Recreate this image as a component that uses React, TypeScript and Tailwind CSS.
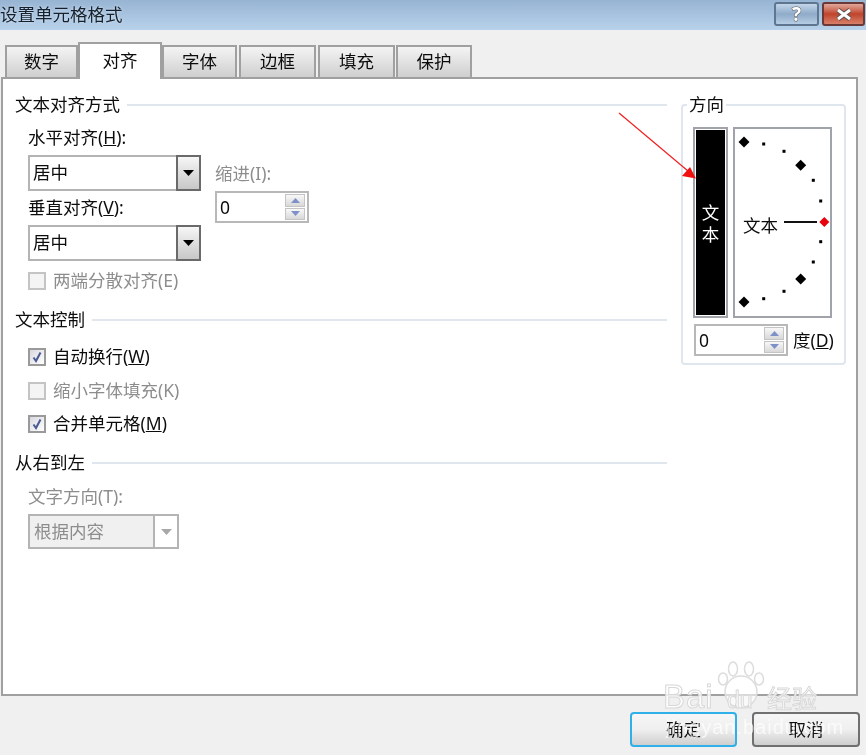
import React from "react";

const Heading = ({ children, top }: { children: React.ReactNode; top: string }) => (
  <div className={`flex h-6 items-center gap-[7px] ${top}`}>
    <span className="-mt-[2px] whitespace-nowrap text-[#0c0c0c]">{children}</span>
    <div className="h-[2px] flex-1 bg-[#dfe6ee]" />
  </div>
);

const Label = ({ children, className = "" }: { children: React.ReactNode; className?: string }) => (
  <div className={`h-6 leading-[22px] whitespace-nowrap ${className}`}>{children}</div>
);

const Check = ({ on, disabled, label, top }: { on?: boolean; disabled?: boolean; label: React.ReactNode; top: string }) => (
  <div className={`ml-[13px] flex h-6 items-center gap-[7px] ${top}`}>
    <div className={`flex h-[18px] w-[18px] items-center justify-center border-2 ${disabled ? "border-[#c4c4c4] bg-[#f4f4f4]" : "border-[#9a9a9a] bg-gradient-to-br from-[#d8d8e0] to-white"}`}>
      {on && (
        <svg width="12" height="12" viewBox="0 0 12 12">
          <path d="M2.5 6.5 L5 10 L9.5 1.5" fill="none" stroke="#4a5a94" strokeWidth="2" />
        </svg>
      )}
    </div>
    <span className={`-mt-[2px] whitespace-nowrap ${disabled ? "text-[#8d8d8d]" : "text-[#0c0c0c]"}`}>{label}</span>
  </div>
);

const Select = ({ top }: { top: string }) => (
  <div className={`flex h-9 w-[173px] border-2 border-[#b4b4b4] bg-white ${top}`}>
    <div className="flex-1 pl-[3px] leading-[30px] text-[#0c0c0c]">居中</div>
    <div className="-my-[2px] -mr-[2px] flex w-[25px] items-center justify-center border-2 border-[#6a6a6a] bg-gradient-to-b from-[#f6f6f6] to-[#c8c8c8]">
      <svg width="11" height="6" viewBox="0 0 11 6">
        <path d="M0 0 H11 L5.5 6 Z" fill="#000" />
      </svg>
    </div>
  </div>
);

const Spin = ({ className = "" }: { className?: string }) => (
  <div className={`flex h-8 w-[94px] items-center border-2 border-[#b8b8b8] bg-white pl-[3px] ${className}`}>
    <span className="flex-1 text-[#0c0c0c]">0</span>
    <div className="mr-[2px] flex h-[26px] w-5 flex-col gap-px">
      <div className="flex flex-1 items-center justify-center border border-[#c4c4c4] bg-gradient-to-b from-[#f8f8f8] to-[#d8d8d8]">
        <svg width="9" height="5" viewBox="0 0 9 5"><path d="M0 5 L4.5 0 L9 5 Z" fill="#7f90c8" /></svg>
      </div>
      <div className="flex flex-1 items-center justify-center border border-[#c4c4c4] bg-gradient-to-b from-[#f8f8f8] to-[#d8d8d8]">
        <svg width="9" height="5" viewBox="0 0 9 5"><path d="M0 0 H9 L4.5 5 Z" fill="#7f90c8" /></svg>
      </div>
    </div>
  </div>
);

const Tab = ({ children, w, active }: { children: React.ReactNode; w: string; active?: boolean }) =>
  active ? (
    <div className={`relative z-10 -mb-[2px] flex h-[37px] items-center justify-center border-2 border-b-0 border-[#a0a0a0] bg-white pb-1 text-[#0c0c0c] ${w}`}>{children}</div>
  ) : (
    <div className={`flex h-8 items-center justify-center border-2 border-b-0 border-[#a0a0a0] bg-gradient-to-b from-[#f4f4f4] to-[#cfcfcf] pb-[2px] text-[#0c0c0c] ${w}`}>{children}</div>
  );

const Diamond = ({ x, y, r, c }: { x: number; y: number; r: number; c: string }) => (
  <path d={`M${x - r} ${y} L${x} ${y - r} L${x + r} ${y} L${x} ${y + r} Z`} fill={c} />
);

const Dial = () => {
  const big = [[11, 15], [67.7, 38.3], [67.7, 152], [11, 175]];
  const small = [[30.7, 17], [51, 24.3], [80.3, 53.3], [87.7, 74], [87.7, 114.7], [80.3, 135], [51, 164.3], [30.7, 171.7]];
  return (
    <svg width="99" height="191" viewBox="0 0 95 187" className="border-2 border-[#a0a4aa] bg-white">
      <g transform="translate(-2 -2)">
        {big.map(([x, y]) => <Diamond key={`${x}${y}`} x={x} y={y} r={5.5} c="#000" />)}
        {small.map(([x, y]) => <rect key={`${x}${y}`} x={x - 1.5} y={y - 1.5} width="3" height="3" fill="#000" />)}
        <rect x="51" y="94" width="33" height="2" fill="#111" />
        <Diamond x={91.3} y={95} r={5} c="#e8000c" />
        <text x="10" y="105" fontSize="17.5" fill="#0c0c0c">文本</text>
      </g>
    </svg>
  );
};

export default function App() {
  return (
    <div className="relative h-[755px] w-[866px] overflow-hidden bg-[#f0f0f0] text-[17.5px] leading-6 blur-[0.35px] font-['Noto_Sans','Noto_Sans_CJK_SC',sans-serif]">
      {/* title bar */}
      <div className="flex h-[30px] items-start justify-between bg-gradient-to-b from-[#97b4d3] to-[#b8d2eb]">
        <div className="h-[30px] leading-[28px] whitespace-nowrap text-[#15202c] [text-shadow:0_0_3px_#dbe8f5]">设置单元格格式</div>
        <div className="mt-[2px] mr-px flex gap-[3px]">
          <div className="flex h-[24px] w-[45px] items-center justify-center rounded-[3px] border-2 border-[#5f7690] bg-gradient-to-b from-[#c4d6e9] via-[#8fabc9] to-[#b6cde4]">
            <span className="text-[19px] leading-none font-bold text-white [-webkit-text-stroke:1px_#5a5a5a] [paint-order:stroke]">?</span>
          </div>
          <div className="flex h-[24px] w-[43px] items-center justify-center rounded-[3px] border-2 border-[#6b3a38] bg-gradient-to-b from-[#e0a89b] via-[#bf432b] to-[#d87f69]">
            <svg width="18" height="13" viewBox="0 0 18 13">
              <path d="M3 2 L15 11 M15 2 L3 11" stroke="#555" strokeWidth="5" />
              <path d="M3 2 L15 11 M15 2 L3 11" stroke="#fff" strokeWidth="3" />
            </svg>
          </div>
        </div>
      </div>

      {/* tabs */}
      <div className="mt-3 flex h-[35px] items-end pl-[5px]">
        <Tab w="w-[73px]">数字</Tab>
        <Tab w="w-[84px]" active>对齐</Tab>
        <Tab w="w-[75px]">字体</Tab>
        <div className="w-[2px]" />
        <Tab w="w-[77px]">边框</Tab>
        <div className="w-[2px]" />
        <Tab w="w-[77px]">填充</Tab>
        <div className="w-[1px]" />
        <Tab w="w-[76px]">保护</Tab>
      </div>

      {/* panel */}
      <div className="ml-px flex h-[619px] w-[857px] border-2 border-[#a0a0a0] bg-white">
        <div className="w-[664px] pt-[14px] pl-[12px]">
          <Heading top="">文本对齐方式</Heading>
          <div className="mt-[9px] ml-[13px] flex">
            <div className="w-[173px]">
              <Label className="text-[#0c0c0c]">水平对齐(<u>H</u>):</Label>
              <Select top="mt-[5px]" />
              <Label className="mt-[5px] text-[#0c0c0c]">垂直对齐(<u>V</u>):</Label>
              <Select top="mt-[5px]" />
            </div>
            <div className="ml-[14px] pt-[36px]">
              <Label className="text-[#8d8d8d]">缩进(I):</Label>
              <Spin className="mt-[5px]" />
            </div>
          </div>
          <Check disabled label="两端分散对齐(E)" top="mt-2" />
          <Heading top="mt-[15px]">文本控制</Heading>
          <Check on label={<>自动换行(<u>W</u>)</>} top="mt-[13px]" />
          <Check disabled label="缩小字体填充(K)" top="mt-[10px]" />
          <Check on label={<>合并单元格(<u>M</u>)</>} top="mt-[9px]" />
          <Heading top="mt-[15px]">从右到左</Heading>
          <Label className="mt-[10px] ml-[13px] text-[#8d8d8d]">文字方向(T):</Label>
          <div className="mt-[5px] ml-[13px] flex h-[35px] w-[151px] border-2 border-[#b4b4b4] bg-[#f0f0f0]">
            <div className="flex-1 pl-1 leading-[30px] text-[#8d8d8d]">根据内容</div>
            <div className="flex w-[24px] items-center justify-center border-l-2 border-[#b4b4b4] bg-white">
              <svg width="11" height="6" viewBox="0 0 11 6"><path d="M0 0 H11 L5.5 6 Z" fill="#a8a8a8" /></svg>
            </div>
          </div>
        </div>

        <div className="ml-[14px] pt-[25px]">
          <div className="relative h-[261px] w-[165px] rounded-[4px] border-2 border-[#dfe6ee] pt-[21px] pl-[10px]">
            <span className="absolute -top-[14px] left-[4px] bg-white px-[2px] text-[#0c0c0c]">方向</span>
            <div className="flex gap-[5px]">
              <div className="h-[191px] w-[35px] border-2 border-[#a0a4aa] bg-white p-px">
                <div className="flex h-full flex-col items-center justify-center bg-black leading-[22px] text-white">
                  <span>文</span>
                  <span>本</span>
                </div>
              </div>
              <Dial />
            </div>
            <div className="mt-[6px] ml-px flex items-center">
              <Spin />
              <span className="ml-[5px] whitespace-nowrap text-[#0c0c0c]">度(<u>D</u>)</span>
            </div>
          </div>
        </div>
      </div>

      {/* footer buttons */}
      <div className="mt-4 flex justify-end gap-[15px] pr-[6px]">
        <div className="flex h-[35px] w-[107px] items-center justify-center rounded-[4px] border-2 border-[#2fb0e8] bg-gradient-to-b from-[#f6f6f6] via-[#efefef] to-[#cfcfcf] pb-[2px] text-[#111]">确定</div>
        <div className="flex h-[35px] w-[108px] items-center justify-center rounded-[4px] border-2 border-[#707070] bg-gradient-to-b from-[#f6f6f6] via-[#efefef] to-[#cfcfcf] pb-[2px] text-[#111]">取消</div>
      </div>

      {/* red annotation arrow */}
      <svg className="pointer-events-none absolute top-[100px] left-[610px]" width="100" height="90" viewBox="610 100 100 90">
        <path d="M619 113 L688 171" stroke="#f02020" strokeWidth="1.2" fill="none" />
        <path d="M696 178.5 L682 176 L690 167 Z" fill="#f01010" />
      </svg>

      {/* watermark */}
      <div className="pointer-events-none absolute top-[660px] left-[663px] h-[90px] w-[170px] font-['Liberation_Sans',sans-serif]">
        <svg className="absolute top-0 left-[52px]" width="52" height="50" viewBox="0 0 52 50">
          <g fill="#fff" fillOpacity="0.6" stroke="#dcdcdc" strokeWidth="1.5">
            <ellipse cx="8" cy="19" rx="4.5" ry="6" />
            <ellipse cx="18" cy="9" rx="4.5" ry="7" />
            <ellipse cx="34" cy="9" rx="4.5" ry="7" />
            <ellipse cx="44" cy="19" rx="4.5" ry="6" />
            <circle cx="26" cy="32" r="16" />
          </g>
        </svg>
        <span className="absolute top-[19px] left-0 text-[33px] leading-9 tracking-[1px] text-white/80 [-webkit-text-stroke:1px_#d8d8d8]">Bai</span>
        <span className="absolute top-[28px] left-[64px] text-[23px] leading-6 text-white/80 [-webkit-text-stroke:1px_#d8d8d8]">du</span>
        <span className="absolute top-[19px] left-[104px] text-[25px] leading-9 whitespace-nowrap text-white/80 [-webkit-text-stroke:1px_#d8d8d8] font-['Noto_Sans_CJK_SC',sans-serif]">经验</span>
        <span className="absolute top-[55px] left-[3px] text-[20px] leading-6 tracking-[1px] whitespace-nowrap text-white/70">jingyan.baidu.com</span>
      </div>
    </div>
  );
}
